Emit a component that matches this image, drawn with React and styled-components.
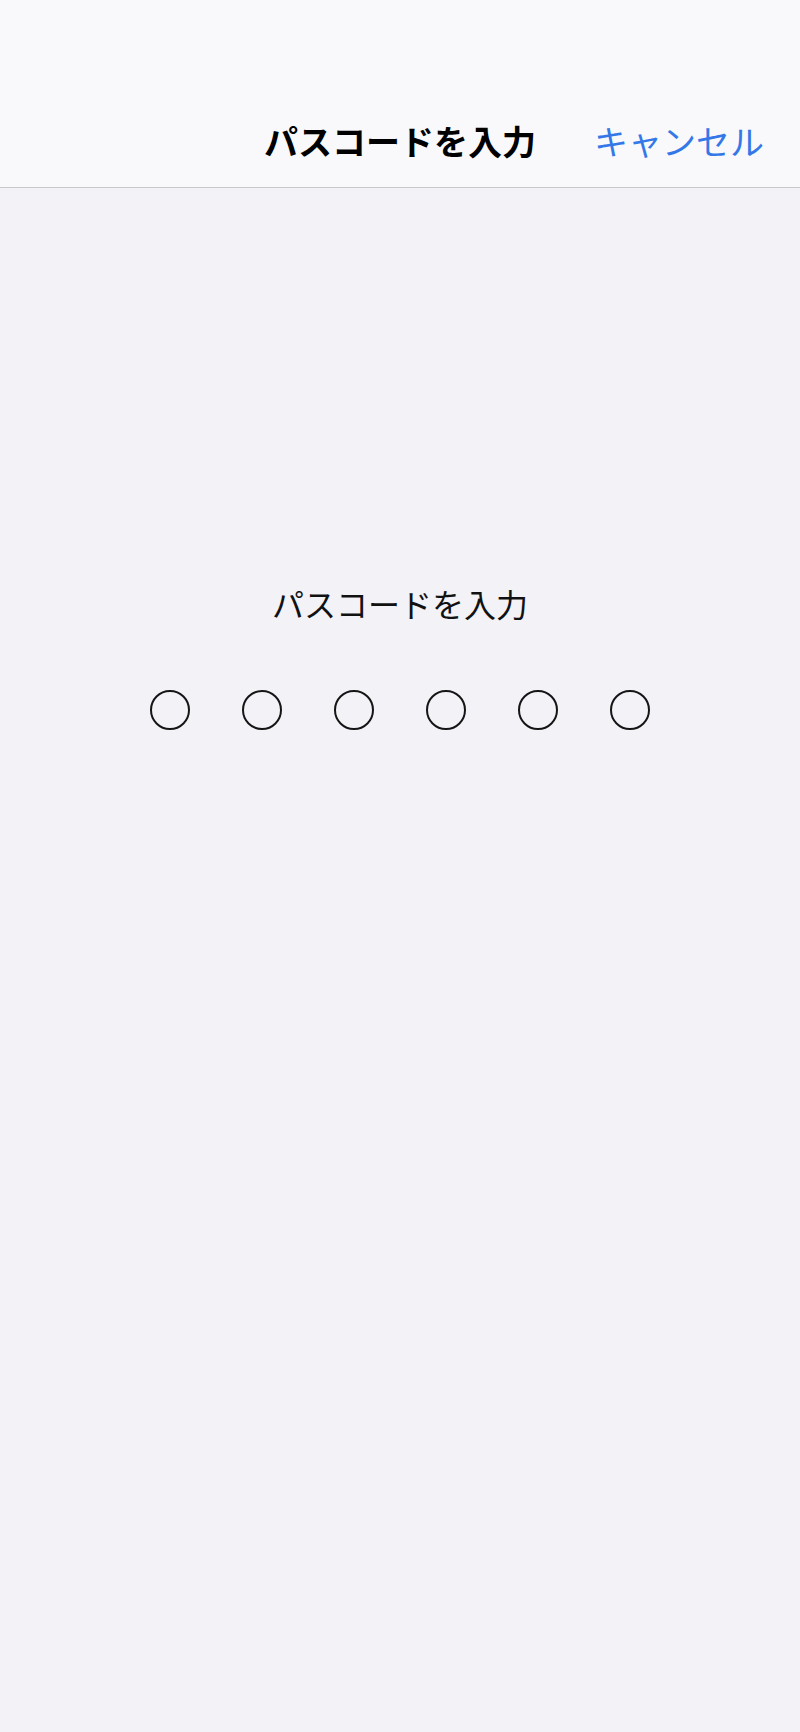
import React from "react";
import styled, {createGlobalStyle} from "styled-components";

const GlobalStyle = createGlobalStyle`
  html, body {
    margin: 0;
    padding: 0;
    background: #f2f2f7;
  }
  body {
    font-family: "Noto Sans CJK JP", "Noto Sans", sans-serif;
  }
`;

const Screen = styled.div`
  width: 800px;
  min-height: 1732px;
  background: #f2f2f7;
  display: flex;
  flex-direction: column;
`;

const NavBar = styled.header`
  height: 188px;
  box-sizing: border-box;
  background: #f9f9fb;
  border-bottom: 1px solid #c8c8cc;
  display: grid;
  grid-template-columns: 1fr auto 1fr;
  align-items: center;
  padding: 95px 36px 0 36px;
`;

const Title = styled.h1`
  grid-column: 2;
  margin: 0;
  font-size: 34px;
  font-weight: 700;
  color: #000;
  line-height: 1;
`;

const CancelButton = styled.button`
  grid-column: 3;
  justify-self: end;
  border: none;
  background: none;
  padding: 0;
  font-family: inherit;
  font-size: 34px;
  font-weight: 400;
  color: #3478e8;
  line-height: 1;
  cursor: pointer;
`;

const Body = styled.main`
  display: flex;
  flex-direction: column;
  align-items: center;
  padding-top: 396px;
`;

const Prompt = styled.p`
  margin: 0;
  font-size: 32px;
  font-weight: 400;
  color: #111;
  line-height: 38px;
`;

const Dots = styled.div`
  display: flex;
  gap: 52px;
  margin-top: 68px;
`;

const Dot = styled.span`
  width: 40px;
  height: 40px;
  box-sizing: border-box;
  border-radius: 50%;
  border: 2px solid #151515;
  background: ${p => (p.$filled ? "#151515" : "transparent")};
`;

export default function App() {
    const entered = 0;
    return (
        <Screen>
            <GlobalStyle/>
            <NavBar>
                <Title>パスコードを入力</Title>
                <CancelButton>キャンセル</CancelButton>
            </NavBar>
            <Body>
                <Prompt>パスコードを入力</Prompt>
                <Dots>
                    {[0, 1, 2, 3, 4, 5].map(i => (
                        <Dot key={i} $filled={i < entered}/>
                    ))}
                </Dots>
            </Body>
        </Screen>
    );
}
